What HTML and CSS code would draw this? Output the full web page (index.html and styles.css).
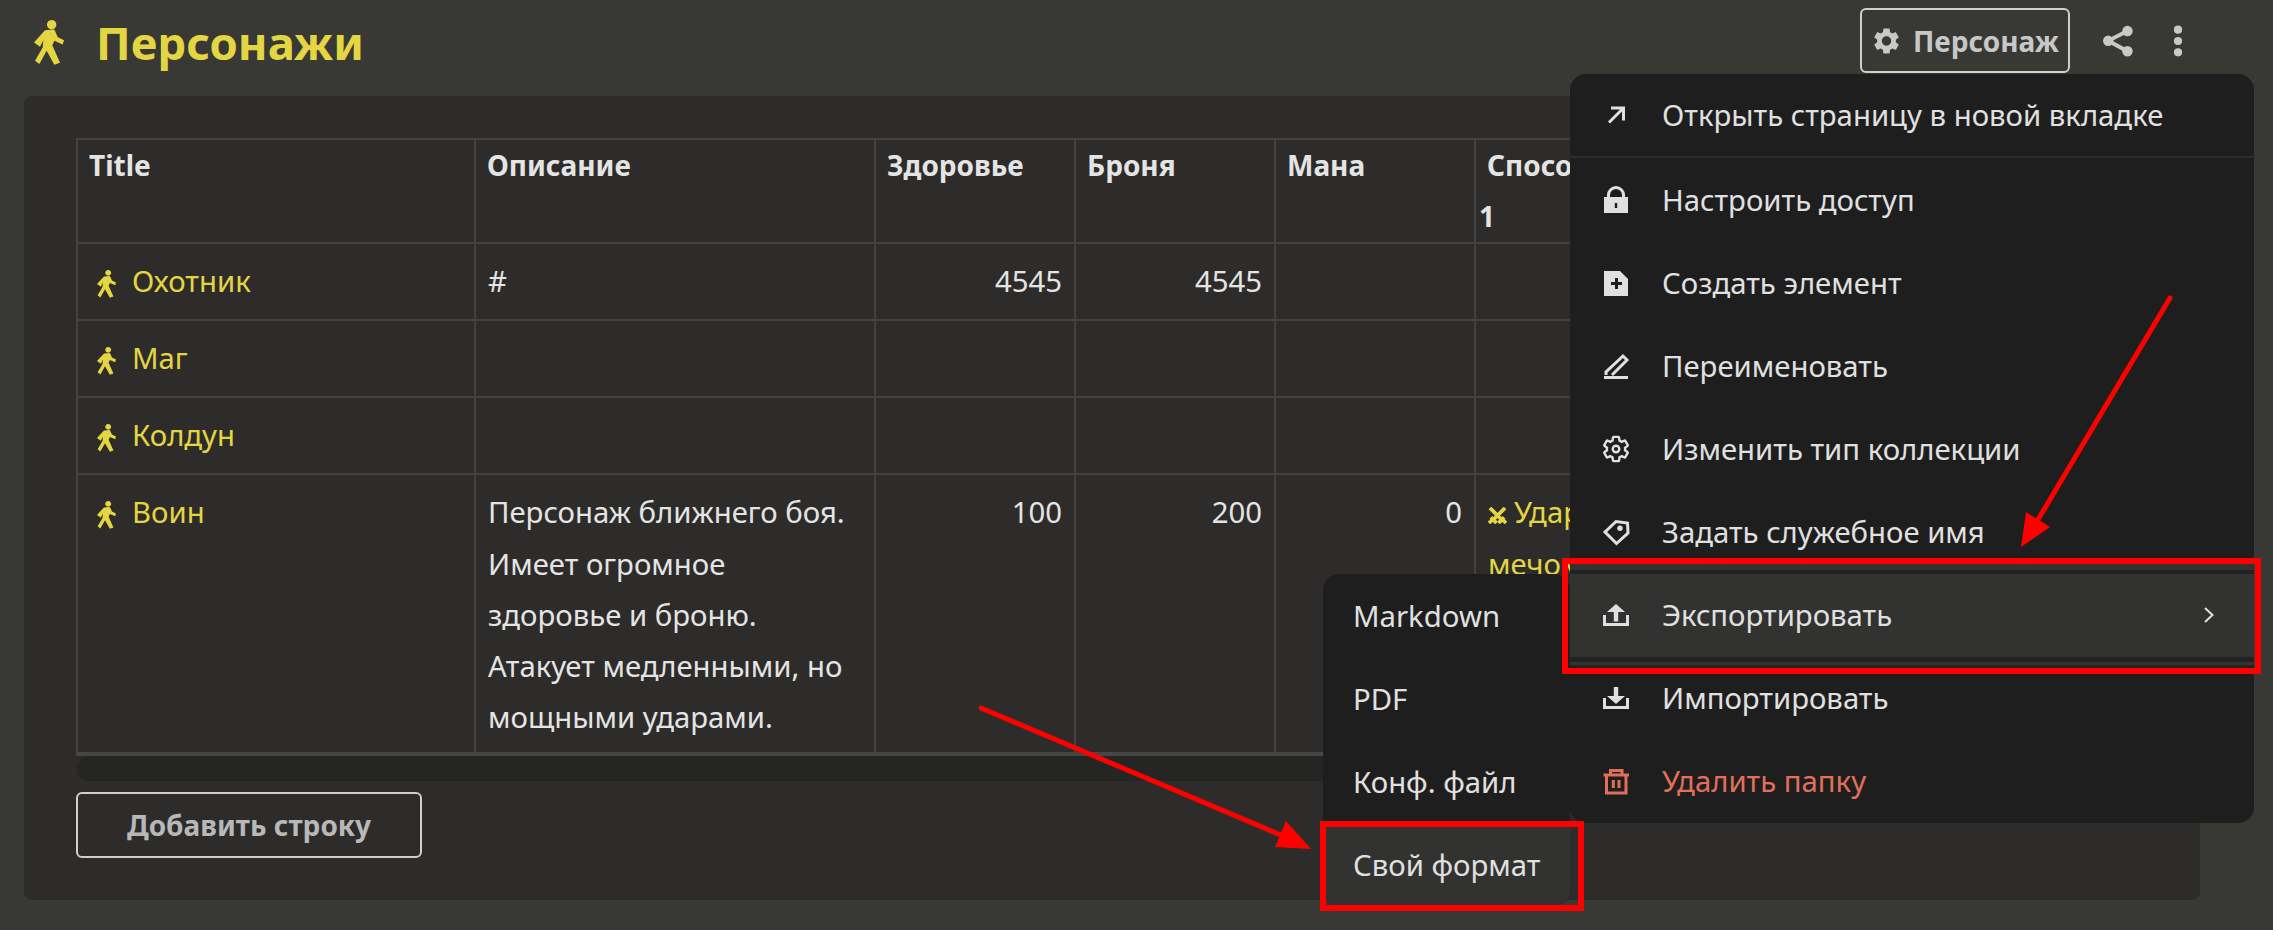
FILE: index.html
```html
<!DOCTYPE html>
<html lang="ru">
<head>
<meta charset="utf-8">
<title>Персонажи</title>
<link rel="stylesheet" href="styles.css">
</head>
<body>
<svg class="defs" width="0" height="0" aria-hidden="true">
  <symbol id="walker" viewBox="42 29 90 136" preserveAspectRatio="none"><path d="M95 29a14 14 0 1 1-.01 0zM75 60l28-2 10 22 19 10-4 13-25-11-6 13 23 53-17 6-23-42-22 40-13-10 23-40 2-22-10 20-18-13z"/></symbol>
</svg>
<header class="topbar">
  <div class="title">
    <svg class="title-icon"><use href="#walker"/></svg>
    <h1>Персонажи</h1>
  </div>
  <div class="actions">
    <button class="type-btn">
      <svg class="gear" viewBox="2.500 2 19 20"><path d="M19.140 12.940c.04-.3.06-.61.06-.94 0-.32-.02-.64-.07-.94l2.030-1.580c.18-.14.23-.41.12-.61l-1.920-3.320c-.12-.22-.37-.29-.59-.22l-2.390.96c-.5-.38-1.030-.7-1.620-.94l-.36-2.540c-.04-.24-.24-.41-.48-.41h-3.840c-.24 0-.43.17-.47.41l-.36 2.540c-.59.24-1.130.57-1.620.94l-2.390-.96c-.22-.08-.47 0-.59.22L2.740 8.870c-.12.21-.08.47.12.61l2.030 1.580c-.05.3-.09.63-.09.94s.02.64.07.94l-2.030 1.580c-.18.14-.23.41-.12.61l1.920 3.320c.12.22.37.29.59.22l2.390-.96c.5.38 1.030.7 1.620.94l.36 2.540c.05.24.24.41.48.41h3.840c.24 0 .44-.17.47-.41l.36-2.540c.59-.24 1.130-.56 1.620-.94l2.390.96c.22.08.47 0 .59-.22l1.920-3.320c.12-.22.07-.47-.12-.61l-2.010-1.580zM12 15.600c-1.980 0-3.600-1.620-3.600-3.600s1.620-3.600 3.600-3.600 3.600 1.620 3.600 3.600-1.620 3.600-3.600 3.600z"/></svg>
      Персонаж
    </button>
    <svg class="share" viewBox="965 75 92 95"><circle cx="1040" cy="92" r="16"/><circle cx="981" cy="122" r="16"/><circle cx="1040" cy="154" r="16"/><path class="share-line" d="M1040 92 981 122 1040 154"/></svg>
    <svg class="dots" viewBox="0 0 24 24"><circle cx="12" cy="4" r="2.900"/><circle cx="12" cy="12" r="2.900"/><circle cx="12" cy="20" r="2.900"/></svg>
  </div>
</header>

<main class="card">
  <div class="table-wrap">
    <table class="grid">
      <colgroup>
        <col class="c-title"><col class="c-desc"><col class="c-num"><col class="c-num"><col class="c-num"><col class="c-num"><col class="c-rest">
      </colgroup>
      <thead>
        <tr><th>Title</th><th>Описание</th><th>Здоровье</th><th>Броня</th><th>Мана</th><th>Способность<br>1</th><th></th></tr>
      </thead>
      <tbody>
        <tr>
          <td><a class="link"><svg class="row-icon"><use href="#walker"/></svg>Охотник</a></td>
          <td>#</td><td class="num">4545</td><td class="num">4545</td><td></td><td></td><td></td>
        </tr>
        <tr><td><a class="link"><svg class="row-icon"><use href="#walker"/></svg>Маг</a></td><td></td><td></td><td></td><td></td><td></td><td></td></tr>
        <tr><td><a class="link"><svg class="row-icon"><use href="#walker"/></svg>Колдун</a></td><td></td><td></td><td></td><td></td><td></td><td></td></tr>
        <tr>
          <td><a class="link"><svg class="row-icon"><use href="#walker"/></svg>Воин</a></td>
          <td>Персонаж ближнего боя. Имеет огромное здоровье и броню. Атакует медленными, но мощными ударами.</td>
          <td class="num">100</td><td class="num">200</td><td class="num">0</td>
          <td><a class="link"><svg class="sword" viewBox="0 0 20 18"><path class="sword-line" d="M2 1 15 14M18 1 5 14M3 11l6 6M17 11l-6 6M1 17l3-3M19 17l-3-3"/></svg>Удар<br>мечом</a></td>
          <td></td>
        </tr>
      </tbody>
    </table>
    <div class="scrollbar"></div>
  </div>
  <button class="add-row">Добавить строку</button>
</main>

<nav class="submenu">
  <div class="item">Markdown</div>
  <div class="item">PDF</div>
  <div class="item">Конф. файл</div>
  <div class="item is-active">Свой формат</div>
</nav>

<nav class="menu">
  <div class="item first">
    <svg class="ico" viewBox="0 0 30 30"><path class="st" d="M9 22.500 23.500 8M11 8h12.500v12.500"/></svg>Открыть страницу в новой вкладке
  </div>
  <div class="item">
    <svg class="ico" viewBox="0 0 30 30"><path class="st" d="M8.500 13v-3a7.500 7.500 0 0 1 15 0v3"/><path d="M4 12h24v16H4z"/><path class="hole" d="M14.800 18h2.400v5h-2.400z"/></svg>Настроить доступ
  </div>
  <div class="item">
    <svg class="ico" viewBox="0 0 30 30"><path d="M4 3h16l8 8v17H4z"/><path class="hole-st" d="M16.500 10v11M11 15.500h11"/></svg>Создать элемент
  </div>
  <div class="item">
    <svg class="ico" viewBox="0 0 30 30"><path class="st" d="M6 24v-3L23 5l4 4-15 15M4 26.500h24"/></svg>Переименовать
  </div>
  <div class="item">
    <svg class="ico" viewBox="-0.670 0.120 23.750 23.750"><path class="st thin" d="M19.140 12.940c.04-.3.06-.61.06-.94 0-.32-.02-.64-.07-.94l2.030-1.580c.18-.14.23-.41.12-.61l-1.920-3.320c-.12-.22-.37-.29-.59-.22l-2.390.96c-.5-.38-1.030-.7-1.620-.94l-.36-2.540c-.04-.24-.24-.41-.48-.41h-3.840c-.24 0-.43.17-.47.41l-.36 2.540c-.59.24-1.130.57-1.620.94l-2.390-.96c-.22-.08-.47 0-.59.22L2.740 8.870c-.12.21-.08.47.12.61l2.030 1.580c-.05.3-.09.63-.09.94s.02.64.07.94l-2.030 1.580c-.18.14-.23.41-.12.61l1.920 3.320c.12.22.37.29.59.22l2.390-.96c.5.38 1.030.7 1.620.94l.36 2.540c.05.24.24.41.48.41h3.840c.24 0 .44-.17.47-.41l.36-2.540c.59-.24 1.130-.56 1.620-.94l2.390.96c.22.08.47 0 .59-.22l1.920-3.320c.12-.22.07-.47-.12-.61l-2.010-1.580z"/><circle class="st thin" cx="12" cy="12" r="2.600"/></svg>Изменить тип коллекции
  </div>
  <div class="item">
    <svg class="ico" viewBox="0 0 30 30"><path class="st" d="M5 15 16 4.500 27.500 6l.5 10-11.500 10.500z"/><circle cx="20" cy="11.300" r="2.700"/></svg>Задать служебное имя
  </div>
  <div class="item is-active">
    <svg class="ico" viewBox="0 0 30 30"><path class="st" d="M4.500 15v9.500h23V15"/><path d="M16 4l9 8h-6.800v9.500h-4.400V12H7z"/></svg>Экспортировать
    <svg class="chev" viewBox="0 0 12 16"><path class="st" d="M2 1l7.500 7L2 15"/></svg>
  </div>
  <div class="item">
    <svg class="ico" viewBox="0 0 30 30"><path class="st" d="M4.500 15v9.500h23V15"/><path d="M13.800 4h4.400v9H25l-9 8-9-8h6.800z"/></svg>Импортировать
  </div>
  <div class="item danger">
    <svg class="ico" viewBox="0 0 30 30"><path class="st" d="M3.500 9h25.500M10.500 9V4.500h11.500V9M6.500 9h19.500v18H6.500zM13.300 14v8M19 14v8"/></svg>Удалить папку
  </div>
</nav>

<svg class="annot" viewBox="0 0 2273 930" width="2273" height="930">
  <path class="band-dark" d="M1570 570h684v4h-684zM1570 657h684v5h-684zM1570 665h684v3h-684z"/>
  <path class="band-light" d="M1570 564h684v6h-684zM1570 662h684v3h-684z"/>
  <rect class="mark" x="1565" y="561" width="693" height="110"/>
  <rect class="mark" x="1323" y="824" width="258" height="84"/>
  <path class="line" d="M2170 298 2033 528M981 708 1283 836"/>
  <path class="head" d="M2021 547 2026 512 2050 527zM1311 849 1275 847 1286 821z"/>
</svg>
</body>
</html>
```
FILE: styles.css
```css
* { box-sizing: border-box; }
html, body { margin: 0; height: 100%; }
body {
  width: 2273px;
  height: 930px;
  overflow: hidden;
  position: relative;
  background: #383934;
  font-family: "Noto Sans", sans-serif;
  font-size: 29.300px;
  color: #e4e4e4;
}
.defs { position: absolute; }
.topbar {
  height: 96px;
  padding: 8px 78px 0 34px;
  display: flex;
  justify-content: space-between;
  align-items: flex-start;
}
.title { display: flex; align-items: center; height: 68px; gap: 32px; }
.title-icon { width: 30px; height: 45px; fill: #e4d543; }
.title h1 { margin: 0; font-size: 45.500px; font-weight: 700; color: #e4d543; line-height: 68px; }
.actions { display: flex; align-items: center; height: 65px; }
.type-btn {
  width: 210px;
  height: 65px;
  display: flex;
  align-items: center;
  gap: 14px;
  padding: 0 10px 0 12px;
  background: transparent;
  border: 2px solid #cfcfcf;
  border-radius: 6px;
  font: 700 28px "Noto Sans", sans-serif;
  color: #c8c8c8;
  white-space: nowrap;
}
.gear { width: 25px; height: 26px; fill: #c8c8c8; flex: none; }
.share { width: 30px; height: 32px; fill: #c8c8c8; margin-left: 33px; }
.share-line { fill: none; stroke: #c8c8c8; stroke-width: 12; }
.dots { width: 34px; height: 34px; fill: #c8c8c8; margin-left: 28px; }

.card {
  margin-left: 24px;
  width: 2176px;
  height: 804px;
  padding: 42px 37px 0 52px;
  background: #2d2c2a;
  border-radius: 8px;
}
.table-wrap { overflow: hidden; }
.grid {
  table-layout: fixed;
  width: 2100px;
  border-collapse: collapse;
  line-height: 51.200px;
  border-bottom: 4px solid #464644;
}
.c-title { width: 398px; }
.c-desc { width: 400px; }
.c-num { width: 200px; }
.grid th, .grid td {
  border: 2px solid #434240;
  vertical-align: top;
  text-align: left;
}
.grid th { padding: 0 3px; text-indent: 8px; font-weight: 700; font-size: 28px; }
.grid td { padding: 12px 12px 9px; height: 77px; }
.grid td.num { text-align: right; padding-right: 12px; }
.link { color: #e4d543; }
.row-icon { width: 19px; height: 28px; fill: #e4d543; vertical-align: -6px; margin: 0 16px 0 7px; }
.sword { width: 19px; height: 17px; vertical-align: -1px; margin-right: 7px; }
.sword-line { fill: none; stroke: #e4d543; stroke-width: 4; }
.scrollbar { height: 25px; margin-left: 1px; background: #252523; border-radius: 12px; }
.add-row {
  display: block;
  margin: 11px 0 0;
  width: 346px;
  height: 66px;
  background: transparent;
  border: 2px solid #cfcfcf;
  border-radius: 6px;
  font: 700 28px "Noto Sans", sans-serif;
  color: #b8b8b8;
}

.menu, .submenu {
  position: absolute;
  background: #1e1e1e;
  color: #e0e0e0;
}
.menu { left: 1570px; top: 74px; width: 684px; border-radius: 16px; }
.submenu { left: 1323px; top: 574px; width: 247px; border-radius: 16px; }
.item {
  height: 83.100px;
  display: flex;
  align-items: center;
  white-space: nowrap;
}
.menu .item { padding: 0 30px; }
.submenu .item { padding: 0 30px; }
.item.first { border-bottom: 2px solid #2c2c2c; height: 84px; }
.item.is-active { background: #323230; }
.submenu .item.is-active { border-radius: 0 0 16px 16px; }
.ico { width: 30px; height: 30px; fill: #e0e0e0; margin-right: 32px; flex: none; }
.st { fill: none; stroke: currentColor; stroke-width: 3; }
.st.thin { stroke-width: 1.900; }
.hole { fill: #1e1e1e; }
.hole-st { fill: none; stroke: #1e1e1e; stroke-width: 3; }
.chev { width: 12px; height: 16px; margin-left: auto; margin-right: 9px; color: #e0e0e0; flex: none; }
.chev .st { stroke-width: 2; }
.danger { color: #e0705a; }
.danger .ico { fill: #e0705a; }

.annot { position: absolute; left: 0; top: 0; pointer-events: none; }
.band-dark { fill: #222221; }
.band-light { fill: #323230; }
.mark { fill: none; stroke: #ff0000; stroke-width: 6; }
.line { fill: none; stroke: #ff0000; stroke-width: 5; stroke-linecap: round; }
.head { fill: #ff0000; }
```
